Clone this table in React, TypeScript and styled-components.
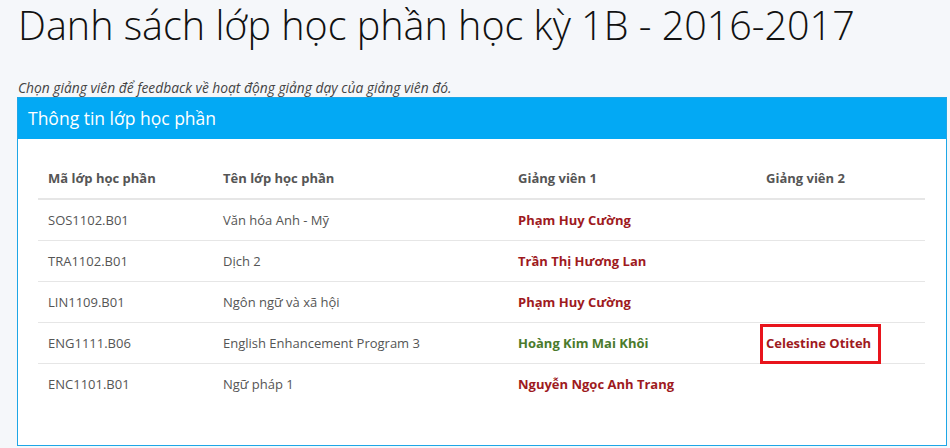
import styled, { createGlobalStyle } from "styled-components";

const GlobalStyle = createGlobalStyle`
  body {
    margin: 0;
    background: #f5f7fa;
    font-family: "Open Sans", "Liberation Sans", sans-serif;
    color: #555;
  }
`;

const Page = styled.div`
  padding: 0 3px 0 17px;
`;

const Title = styled.h1`
  margin: 0;
  padding-left: 1px;
  font-size: 39.5px;
  font-weight: 300;
  line-height: 50px;
  color: #111;
  white-space: nowrap;
`;

const Hint = styled.p`
  margin: 29px 0 0;
  padding-left: 1px;
  font-size: 13.8px;
  font-style: italic;
  line-height: 18px;
  color: #444;
`;

const Panel = styled.section`
  width: 930px;
  box-sizing: border-box;
  border: 1px solid #1ea6e6;
  background: #fff;
`;

const PanelHeading = styled.div`
  background: #03a9f4;
  color: #fff;
  font-size: 17.5px;
  height: 41px;
  line-height: 41px;
  padding: 0 10px;
`;

const PanelBody = styled.div`
  padding: 19px 20px 41px;
`;

const Table = styled.table`
  width: 887px;
  table-layout: fixed;
  border-collapse: collapse;
  font-size: 13px;
`;

const Th = styled.th<{ $w: number }>`
  width: ${(p) => p.$w}px;
  text-align: left;
  font-weight: 700;
  color: #555;
  padding: 10px;
  line-height: 20px;
  border-bottom: 2px solid #e6e6e6;
`;

const Td = styled.td`
  padding: 10px;
  line-height: 20px;
  border-top: 1px solid #e6e6e6;
  color: #555;
  white-space: nowrap;
`;

const Row = styled.tr`
  &:first-child td {
    border-top: 0;
  }
`;

const Teacher = styled.a<{ $tone: "red" | "green" }>`
  font-weight: 700;
  text-decoration: none;
  color: ${(p) => (p.$tone === "green" ? "#4b7a2b" : "#9e1a1e")};
`;

const Marked = styled.span`
  position: relative;
  display: inline-block;
  &::after {
    content: "";
    position: absolute;
    top: -9px;
    bottom: -11px;
    left: -6px;
    right: -10px;
    border: 3px solid #e8141c;
  }
`;

type Course = {
  code: string;
  name: string;
  t1: string;
  t1Tone: "red" | "green";
  t2?: string;
};

const courses: Course[] = [
  { code: "SOS1102.B01", name: "Văn hóa Anh - Mỹ", t1: "Phạm Huy Cường", t1Tone: "red" },
  { code: "TRA1102.B01", name: "Dịch 2", t1: "Trần Thị Hương Lan", t1Tone: "red" },
  { code: "LIN1109.B01", name: "Ngôn ngữ và xã hội", t1: "Phạm Huy Cường", t1Tone: "red" },
  {
    code: "ENG1111.B06",
    name: "English Enhancement Program 3",
    t1: "Hoàng Kim Mai Khôi",
    t1Tone: "green",
    t2: "Celestine Otiteh",
  },
  { code: "ENC1101.B01", name: "Ngữ pháp 1", t1: "Nguyễn Ngọc Anh Trang", t1Tone: "red" },
];

export default function App() {
  return (
    <Page>
      <GlobalStyle />
      <Title>Danh sách lớp học phần học kỳ 1B - 2016-2017</Title>
      <Hint>Chọn giảng viên để feedback về hoạt động giảng dạy của giảng viên đó.</Hint>
      <Panel>
        <PanelHeading>Thông tin lớp học phần</PanelHeading>
        <PanelBody>
          <Table>
            <thead>
              <tr>
                <Th $w={155}>Mã lớp học phần</Th>
                <Th $w={275}>Tên lớp học phần</Th>
                <Th $w={228}>Giảng viên 1</Th>
                <Th $w={149}>Giảng viên 2</Th>
              </tr>
            </thead>
            <tbody>
              {courses.map((c) => (
                <Row key={c.code}>
                  <Td>{c.code}</Td>
                  <Td>{c.name}</Td>
                  <Td>
                    <Teacher href="#" $tone={c.t1Tone}>{c.t1}</Teacher>
                  </Td>
                  <Td>
                    {c.t2 && (
                      <Marked>
                        <Teacher href="#" $tone="red">{c.t2}</Teacher>
                      </Marked>
                    )}
                  </Td>
                </Row>
              ))}
            </tbody>
          </Table>
        </PanelBody>
      </Panel>
    </Page>
  );
}
